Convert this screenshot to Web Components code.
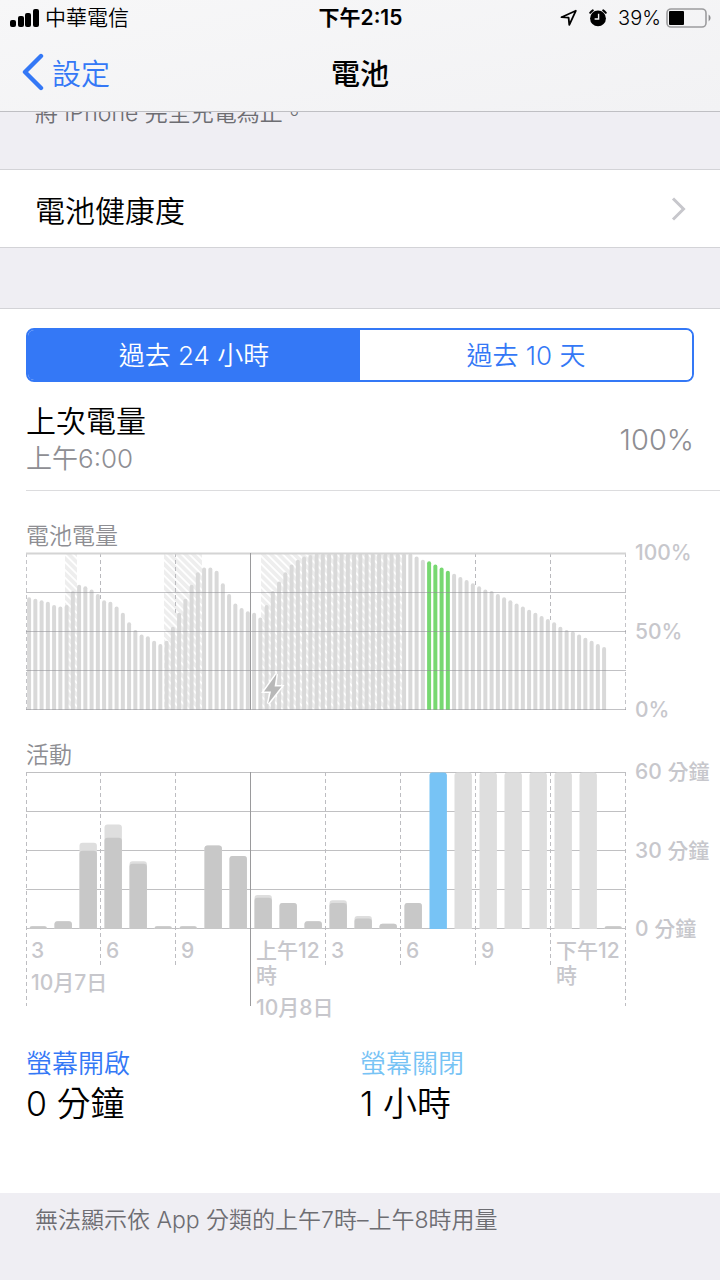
<!DOCTYPE html>
<html lang="zh-Hant">
<head>
<meta charset="utf-8">
<meta name="viewport" content="width=device-width, initial-scale=1">
<title>電池</title>
<style>
  body{
    background-color: #efeef3;
    color: #000;
    font-family: Inter, "Noto Sans CJK TC", sans-serif;
    font-weight: 350;
    margin: 0;
  }
</style>
</head>
<body>
<battery-page></battery-page>

<script>
class StatusBar extends HTMLElement {
  constructor () {
    super()
    this.shadow = this.attachShadow({ mode: 'open' })
  }

  connectedCallback () {
    this.render()
  }

  render () {
    this.shadow.innerHTML =
    `
    <style>
      :host{
        align-items: center;
        display: grid;
        font-size: 21px;
        grid-template-columns: 1fr auto 1fr;
        line-height: 36px;
        padding: 0 9px 0 10px;
      }

      svg{
        display: block;
      }

      .carrier,
      .indicators{
        align-items: center;
        display: flex;
      }

      .carrier{
        gap: 5px;
      }

      .time{
        font-weight: 600;
      }

      .indicators{
        font-size: 20px;
        justify-content: flex-end;
      }

      .alarm{
        margin: 0 11px;
      }

      .battery{
        margin-left: 5px;
      }
    </style>

    <div class="carrier">
      <svg width="30" height="18" viewBox="0 0 30 18" aria-hidden="true">
        <rect x="0" y="11" width="6" height="7" rx="2"/>
        <rect x="8" y="7" width="6" height="11" rx="2"/>
        <rect x="15" y="4" width="6" height="14" rx="2"/>
        <rect x="23" y="0" width="6" height="18" rx="2"/>
      </svg>
      <span>中華電信</span>
    </div>
    <div class="time">下午2:15</div>
    <div class="indicators">
      <svg width="18" height="18" viewBox="0 0 18 18" aria-hidden="true">
        <path d="M1.5 8.2L15.8 1.8L9.3 15.8L8.6 8.6Z" fill="none" stroke="#000" stroke-width="1.8" stroke-linejoin="round"/>
      </svg>
      <svg class="alarm" width="18" height="18" viewBox="0 0 18 18" aria-hidden="true">
        <circle cx="9" cy="9.4" r="7.9"/>
        <path d="M1.2 3.8A9 9 0 0 1 3.8 1.4M16.8 3.8A9 9 0 0 0 14.2 1.4" fill="none" stroke="#000" stroke-width="2" stroke-linecap="round"/>
        <path d="M9.6 4.8V10H5.6" fill="none" stroke="#f6f6f7" stroke-width="1.4"/>
      </svg>
      <span>39%</span>
      <svg class="battery" width="45" height="20" viewBox="0 0 45 20" aria-hidden="true">
        <rect x="1" y="1" width="39" height="18" rx="4" fill="none" stroke="#9c9c9e" stroke-width="1.6"/>
        <rect x="3" y="3" width="15" height="14" rx="1"/>
        <path d="M42.6 6.6Q44.6 8 44.6 10Q44.6 12 42.6 13.4Z" fill="#8e8e90"/>
      </svg>
    </div>
    `
  }
}

customElements.define('status-bar', StatusBar)

class NavBar extends HTMLElement {
  constructor () {
    super()
    this.shadow = this.attachShadow({ mode: 'open' })
  }

  connectedCallback () {
    this.render()
  }

  render () {
    this.shadow.innerHTML =
    `
    <style>
      :host{
        align-items: center;
        display: grid;
        font-size: 29px;
        grid-template-columns: 1fr auto 1fr;
        height: 72px;
        padding: 0 22px 3px;
      }

      a{
        align-items: center;
        color: #3478f6;
        display: flex;
        gap: 8px;
        text-decoration: none;
      }

      h1{
        font-size: 29px;
        font-weight: 500;
        margin: 0;
      }
    </style>

    <a href="#settings">
      <svg width="22" height="38" viewBox="0 0 22 38" aria-hidden="true">
        <path d="M19 3L3 19L19 35" fill="none" stroke="currentColor" stroke-width="4.4" stroke-linecap="round" stroke-linejoin="round"/>
      </svg>
      <slot name="back"></slot>
    </a>
    <h1><slot></slot></h1>
    `
  }
}

customElements.define('nav-bar', NavBar)

class GroupNote extends HTMLElement {
  constructor () {
    super()
    this.shadow = this.attachShadow({ mode: 'open' })
  }

  connectedCallback () {
    this.render()
  }

  render () {
    this.shadow.innerHTML =
    `
    <style>
      :host{
        color: #6d6d72;
        display: block;
        font-size: 23px;
        line-height: 30px;
        padding: 12px 35px;
      }

      p{
        margin: 0;
      }
    </style>

    <p><slot></slot></p>
    `
  }
}

customElements.define('group-note', GroupNote)

class LinkRow extends HTMLElement {
  constructor () {
    super()
    this.shadow = this.attachShadow({ mode: 'open' })
  }

  connectedCallback () {
    this.render()
  }

  render () {
    this.shadow.innerHTML =
    `
    <style>
      :host{
        background-color: #fff;
        border-bottom: 1px solid #d3d3d7;
        border-top: 1px solid #d3d3d7;
        display: block;
      }

      a{
        align-items: center;
        color: #000;
        display: flex;
        font-size: 30px;
        height: 77px;
        justify-content: space-between;
        padding: 0 34px 0 35px;
        text-decoration: none;
      }
    </style>

    <a href="${this.getAttribute('href')}">
      <slot></slot>
      <svg width="15" height="24" viewBox="0 0 15 24" aria-hidden="true">
        <path d="M2 1.5L12.5 12L2 22.5" fill="none" stroke="#c7c7cc" stroke-width="3"/>
      </svg>
    </a>
    `
  }
}

customElements.define('link-row', LinkRow)

class RangeSwitch extends HTMLElement {
  constructor () {
    super()
    this.shadow = this.attachShadow({ mode: 'open' })
  }

  connectedCallback () {
    this.render()
  }

  render () {
    this.shadow.innerHTML =
    `
    <style>
      :host{
        border: 2px solid #3478f6;
        border-radius: 8px;
        box-sizing: border-box;
        display: grid;
        grid-template-columns: 1fr 1fr;
        height: 54px;
        overflow: hidden;
      }

      button{
        background-color: #fff;
        border: 0;
        color: #3478f6;
        cursor: pointer;
        font: inherit;
        font-size: 26px;
        margin: 0;
        padding: 0 0 4px;
      }

      button[aria-pressed="true"]{
        background-color: #3478f6;
        color: #fff;
      }
    </style>

    <button type="button" aria-pressed="true">過去 24 小時</button>
    <button type="button" aria-pressed="false">過去 10 天</button>
    `

    const buttons = this.shadow.querySelectorAll('button')

    buttons.forEach(button => {
      button.addEventListener('click', () => {
        buttons.forEach(other => other.setAttribute('aria-pressed', other === button))
      })
    })
  }
}

customElements.define('range-switch', RangeSwitch)

class LastCharge extends HTMLElement {
  constructor () {
    super()
    this.shadow = this.attachShadow({ mode: 'open' })
  }

  connectedCallback () {
    this.render()
  }

  render () {
    this.shadow.innerHTML =
    `
    <style>
      :host{
        align-items: center;
        border-bottom: 1px solid #dcdcde;
        display: flex;
        justify-content: space-between;
        line-height: 38px;
        padding: 20px 26px 12px 0;
      }

      .title{
        font-size: 30px;
      }

      .detail{
        color: #8e8e93;
        font-size: 26px;
      }

      .value{
        color: #8e8e93;
        font-size: 29px;
      }
    </style>

    <div>
      <div class="title"><slot></slot></div>
      <div class="detail"><slot name="detail"></slot></div>
    </div>
    <div class="value"><slot name="value"></slot></div>
    `
  }
}

customElements.define('last-charge', LastCharge)

// Frame shared by both charts: title on top, plot on the left, scale on the right
class ChartPanel extends HTMLElement {
  constructor () {
    super()
    this.shadow = this.attachShadow({ mode: 'open' })
  }

  connectedCallback () {
    this.render()
  }

  render () {
    const scale = this.getAttribute('scale').split(',')

    this.shadow.innerHTML =
    `
    <style>
      :host{
        display: block;
        margin-top: 30px;
      }

      h2{
        color: #8e8e93;
        font-size: 23px;
        font-weight: inherit;
        line-height: 30px;
        margin: 0 0 2px;
      }

      .chart{
        align-items: start;
        display: grid;
        grid-template-columns: 1fr 94px;
      }

      .scale{
        box-sizing: border-box;
        color: #c7c7cc;
        display: flex;
        flex-direction: column;
        font-size: 21px;
        font-weight: 500;
        height: 183px;
        justify-content: space-between;
        line-height: 26px;
        margin: -13px 0;
        padding-left: 9px;
        white-space: nowrap;
      }
    </style>

    <h2>${this.getAttribute('heading')}</h2>
    <div class="chart">
      <slot></slot>
      <div class="scale">
        ${scale.map(label => `<span>${label}</span>`).join('')}
      </div>
    </div>
    `
  }
}

customElements.define('chart-panel', ChartPanel)

const rows = [39.5, 78.5, 117.5, 156.5]

// Battery level every 15 minutes
const levels = [
  72, 71, 70, 69, 67, 66, 67, 76, 80, 79, 77, 74,
  70, 69, 66, 62, 56, 51, 48, 47, 44, 42, 44, 53,
  62, 71, 80, 88, 91, 91, 89, 81, 74, 68, 65, 63,
  62, 59, 67, 76, 82, 88, 93, 96, 98, 99, 100, 100,
  100, 100, 100, 100, 100, 100, 100, 100, 100, 100, 100, 100,
  100, 100, 98, 96, 95, 93, 91, 89, 87, 85, 83, 81,
  79, 77, 76, 74, 72, 70, 68, 66, 64, 62, 60, 58,
  56, 53, 51, 50, 48, 46, 44, 42, 40
]

class LevelPlot extends HTMLElement {
  constructor () {
    super()
    this.shadow = this.attachShadow({ mode: 'open' })
  }

  connectedCallback () {
    this.render()
  }

  bar (level, index) {
    const x = index * 6.25 + 1.1
    const y = 156.5 - level * 1.56
    const selected = index >= 64 && index < 68

    return `<path d="M${x} 157V${y + 2}a2 2 0 0 1 4 0V157Z" fill="${selected ? '#77d871' : '#d9d9d9'}"/>`
  }

  // Dashes stop where the bars begin
  dash (x) {
    const level = levels[Math.round(x / 6.25)] || 0

    return `<path d="M${x - 0.5} 0V${156.5 - level * 1.56}" stroke="#b9b9bd" stroke-dasharray="4 3"/>`
  }

  render () {
    this.shadow.innerHTML =
    `
    <style>
      :host{
        display: block;
      }

      svg{
        display: block;
        height: 157px;
        overflow: visible;
        width: 100%;
      }
    </style>

    <svg viewBox="0 0 600 157" preserveAspectRatio="none" role="img" aria-label="電池電量">
      <defs>
        <pattern id="charging" width="5.5" height="5.5" patternUnits="userSpaceOnUse" patternTransform="rotate(-45)">
          <rect width="5.5" height="5.5" fill="#fff"/>
          <rect width="3.7" height="5.5" fill="#eee"/>
        </pattern>
      </defs>
      <g fill="url(#charging)">
        <rect x="39" y="0" width="12" height="157"/>
        <rect x="138" y="0" width="38" height="157"/>
        <rect x="235" y="0" width="142" height="157"/>
      </g>
      ${[75, 150, 300, 375, 450, 525].map(x => this.dash(x)).join('')}
      ${levels.map((level, index) => this.bar(level, index)).join('')}
      <path d="M0.5 0V157M599.5 0V157" stroke="#c4c4c8" stroke-dasharray="4 3"/>
      <path d="M0 0.5H600" stroke="#d4d4d4" stroke-width="2"/>
      <path d="${rows.map(y => `M0 ${y}H600`).join('')}" stroke="#8e8e93" stroke-opacity="0.55"/>
      <path d="M224.5 0V157" stroke="#9a9a9c"/>
      <path d="M250.5 121L238 138.5H245L242.2 150.5L255.5 133.5H248.6Z" fill="#b8b8b8" stroke="#fff" stroke-width="3" paint-order="stroke"/>
    </svg>
    `
  }
}

customElements.define('level-plot', LevelPlot)

// Minutes per hour: [screen on, total]
const minutes = [
  [1, 1], [3, 3], [30, 33], [35, 40], [25, 26], [1, 1],
  [1, 1], [32, 32], [28, 28], [12, 13], [10, 10], [3, 3],
  [10, 11], [4, 5], [2, 2], [10, 10], [0, 60], [0, 60],
  [0, 60], [0, 60], [0, 60], [0, 60], [0, 60], [1, 1]
]

class ActivityPlot extends HTMLElement {
  constructor () {
    super()
    this.shadow = this.attachShadow({ mode: 'open' })
  }

  connectedCallback () {
    this.render()
  }

  column (index, value, fill) {
    if (!value) {
      return ''
    }

    const x = index * 25 + 3.5
    const height = Math.max(value * 2.61, 2.8)
    const r = Math.min(3, height - 0.4)

    return `<path d="M${x} 157V${157 - height + r}q0 -${r} ${r} -${r}h${17.4 - 2 * r}q${r} 0 ${r} ${r}V157Z" fill="${fill}"/>`
  }

  render () {
    this.shadow.innerHTML =
    `
    <style>
      :host{
        display: grid;
      }

      svg,
      .axis{
        grid-area: 1 / 1;
      }

      svg{
        display: block;
        height: 234px;
        overflow: visible;
        width: 100%;
      }

      .axis{
        color: #c7c7cc;
        display: grid;
        font-size: 21px;
        font-weight: 500;
        grid-template-columns: 3fr 5fr;
        line-height: 25px;
        padding-top: 166px;
      }

      .hours{
        display: grid;
        grid-auto-columns: 1fr;
        grid-auto-flow: column;
        margin-bottom: 7px;
      }

      .hours span,
      .date{
        padding-left: 5px;
      }
    </style>

    <svg viewBox="0 0 600 234" preserveAspectRatio="none" role="img" aria-label="活動">
      <path d="M0 0.5H600${rows.map(y => `M0 ${y}H600`).join('')}" stroke="#c0c0c2"/>
      <path d="${[75, 150, 300, 375, 450, 525].map(x => `M${x - 0.5} 0V195`).join('')}M0.5 0V234M599.5 0V234" fill="none" stroke="#bdbdc1" stroke-dasharray="4 3"/>
      ${minutes.map(([on, total], index) =>
        this.column(index, total, index === 16 ? '#77c3f5' : '#dedede') +
        this.column(index, on, '#c8c8c8')
      ).join('')}
      <path d="M224.5 0V234" stroke="#9a9a9c"/>
    </svg>
    <div class="axis">
      <div>
        <div class="hours"><span>3</span><span>6</span><span>9</span></div>
        <div class="date">10月7日</div>
      </div>
      <div>
        <div class="hours"><span>上午12時</span><span>3</span><span>6</span><span>9</span><span>下午12時</span></div>
        <div class="date">10月8日</div>
      </div>
    </div>
    `
  }
}

customElements.define('activity-plot', ActivityPlot)

class UsageStat extends HTMLElement {
  constructor () {
    super()
    this.shadow = this.attachShadow({ mode: 'open' })
  }

  connectedCallback () {
    this.render()
  }

  render () {
    this.shadow.innerHTML =
    `
    <style>
      :host{
        display: block;
      }

      .label{
        color: var(--stat-color, #3478f6);
        font-size: 26px;
        line-height: 34px;
      }

      .value{
        font-size: 34px;
        line-height: 46px;
      }
    </style>

    <div class="label">${this.getAttribute('label')}</div>
    <div class="value"><slot></slot></div>
    `
  }
}

customElements.define('usage-stat', UsageStat)

class BatteryPage extends HTMLElement {
  constructor () {
    super()
    this.shadow = this.attachShadow({ mode: 'open' })
  }

  connectedCallback () {
    this.render()
  }

  render () {
    this.shadow.innerHTML =
    `
    <style>
      :host{
        display: block;
      }

      header{
        background: linear-gradient(170deg, #f7f7f8, #f2f2f4);
        border-bottom: 1px solid #bfbfc3;
        position: sticky;
        top: 0;
        z-index: 1;
      }

      /* The note is scrolled half way under the header */
      .scrolled{
        margin-top: -14px;
        padding-bottom: 41px;
        padding-top: 0;
      }

      .usage{
        background-color: #fff;
        border-top: 1px solid #d3d3d7;
        margin-top: 60px;
        padding: 19px 0 66px 26px;
      }

      range-switch{
        margin-right: 26px;
      }

      .stats{
        display: grid;
        grid-template-columns: 1fr 1fr;
        margin: 27px 26px 0 0;
      }

      .screen-off{
        --stat-color: #77c3f5;
      }
    </style>

    <header>
      <status-bar></status-bar>
      <nav-bar><span slot="back">設定</span>電池</nav-bar>
    </header>
    <main>
      <group-note class="scrolled">將 iPhone 完全充電為止。</group-note>
      <link-row href="#health">電池健康度</link-row>
      <section class="usage">
        <range-switch></range-switch>
        <last-charge>
          上次電量
          <span slot="detail">上午6:00</span>
          <span slot="value">100%</span>
        </last-charge>
        <chart-panel heading="電池電量" scale="100%,50%,0%">
          <level-plot></level-plot>
        </chart-panel>
        <chart-panel heading="活動" scale="60 分鐘,30 分鐘,0 分鐘">
          <activity-plot></activity-plot>
        </chart-panel>
        <div class="stats">
          <usage-stat label="螢幕開啟">0 分鐘</usage-stat>
          <usage-stat class="screen-off" label="螢幕關閉">1 小時</usage-stat>
        </div>
      </section>
      <group-note>無法顯示依 App 分類的上午7時–上午8時用量</group-note>
    </main>
    `
  }
}

customElements.define('battery-page', BatteryPage)
</script>
</body>
</html>
